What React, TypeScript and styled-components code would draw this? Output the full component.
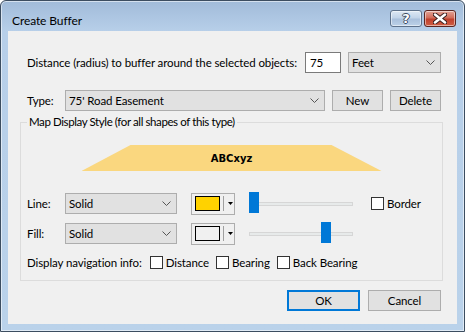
import styled, { createGlobalStyle } from 'styled-components';

const GlobalStyle = createGlobalStyle`
  html, body {
    margin: 0;
    padding: 0;
    background: #ffffff;
  }
  body {
    font-family: Lato, "Noto Sans", sans-serif;
    font-size: 11.5px;
    letter-spacing: -0.1px;
    color: #000;
  }
`;

const Window = styled.div`
  width: 465px;
  height: 332px;
  box-sizing: border-box;
  border: 1px solid #3c4d60;
  border-radius: 6px 6px 0 0;
  background: linear-gradient(#a1bbd9, #b7cfe9 30px, #bad2ea);
  box-shadow: inset 0 0 0 1px rgba(255, 255, 255, 0.55);
  display: flex;
  flex-direction: column;
  overflow: hidden;
`;

const TitleBar = styled.div`
  height: 30px;
  box-sizing: border-box;
  padding: 8px 8px 0 11px;
  display: flex;
  align-items: center;
`;

const Title = styled.div`
  flex: 1;
  font-size: 12px;
`;

const CaptionButtons = styled.div`
  align-self: flex-start;
  margin-top: 1px;
  display: flex;
  gap: 2px;
`;

const CaptionButton = styled.div<{ $close?: boolean }>`
  width: 32px;
  height: 17px;
  box-sizing: border-box;
  border-radius: 3px;
  border: 1px solid ${p => (p.$close ? '#5a2520' : '#5d718b')};
  background: ${p =>
    p.$close
      ? 'linear-gradient(#e3a497, #d26c5a 45%, #c0402c 55%, #cf5e44)'
      : 'linear-gradient(#dde8f4, #c2d4e9 45%, #a9c0dc 55%, #bcd1e8)'};
  box-shadow: inset 0 0 0 1px rgba(255, 255, 255, 0.5);
  display: flex;
  align-items: center;
  justify-content: center;
  color: #fff;
  font-family: "DejaVu Sans", sans-serif;
  font-weight: bold;
  font-size: 13px;
  line-height: 1;
  text-shadow: -1px 0 #3b4b60, 1px 0 #3b4b60, 0 -1px #3b4b60, 0 1px #3b4b60;
`;

const Panel = styled.div`
  margin: 0 7px;
  height: 293px;
  background: #f0f0f0;
  box-sizing: border-box;
  padding: 21px 14px 0 12px;
  display: flex;
  flex-direction: column;
`;

const Row = styled.div<{ $top?: number }>`
  display: flex;
  align-items: center;
  height: 21px;
  padding: 0 2px 0 7px;
  margin-top: ${p => p.$top ?? 0}px;
`;

const Label = styled.span<{ $width?: number }>`
  white-space: nowrap;
  ${p => (p.$width ? `width: ${p.$width}px; flex: none;` : '')}
`;

const TextBox = styled.div`
  width: 36px;
  height: 21px;
  box-sizing: border-box;
  margin-left: auto;
  border: 1px solid #7a7a7a;
  background: #fff;
  padding-left: 4px;
  display: flex;
  align-items: center;
`;

const Select = styled.div<{ $width?: number; $ml?: number }>`
  height: 21px;
  box-sizing: border-box;
  border: 1px solid #adadad;
  background: #e1e1e1;
  padding: 0 5px 0 3px;
  display: flex;
  align-items: center;
  justify-content: space-between;
  ${p => (p.$width ? `width: ${p.$width}px; flex: none;` : 'flex: 1;')}
  margin-left: ${p => p.$ml ?? 0}px;
`;

const Button = styled.div<{ $width: number; $default?: boolean; $ml?: number }>`
  width: ${p => p.$width}px;
  height: 21px;
  box-sizing: border-box;
  border: 1px solid ${p => (p.$default ? '#0078d7' : '#adadad')};
  box-shadow: ${p => (p.$default ? 'inset 0 0 0 1px #0078d7' : 'none')};
  background: #e1e1e1;
  display: flex;
  align-items: center;
  justify-content: center;
  margin-left: ${p => p.$ml ?? 0}px;
`;

const Group = styled.fieldset`
  margin: 3px 0 0;
  padding: 0 6px;
  height: 167px;
  box-sizing: border-box;
  border: 1px solid #dcdcdc;
  display: flex;
  flex-direction: column;
  min-width: 0;
`;

const Legend = styled.legend`
  padding: 0 2px;
  line-height: 16px;
  letter-spacing: -0.4px;
`;

const Preview = styled.div`
  width: 300px;
  height: 26px;
  margin: 15px auto 0;
  background: #fad77f;
  clip-path: polygon(49px 0, 250px 0, 100% 100%, 0 100%);
  display: flex;
  align-items: center;
  justify-content: center;
  font-family: "DejaVu Sans", sans-serif;
  font-weight: bold;
  font-size: 10px;
  letter-spacing: 0;
`;

const StyleRow = styled.div<{ $top: number }>`
  display: flex;
  align-items: center;
  height: 21px;
  margin-top: ${p => p.$top}px;
`;

const ColorButton = styled.div`
  width: 44px;
  height: 22px;
  box-sizing: border-box;
  margin-left: 14px;
  border: 1px solid #adadad;
  background: #f0f0f0;
  display: flex;
  align-items: center;
  padding-left: 3px;
`;

const Swatch = styled.div<{ $color: string }>`
  width: 25px;
  height: 15px;
  box-sizing: border-box;
  border: 1.5px solid #000;
  background: ${p => p.$color};
`;

const Divider = styled.div`
  width: 1px;
  height: 15px;
  background: #a0a0a0;
  margin-left: 3px;
`;

const Slider = styled.div`
  width: 104px;
  height: 21px;
  margin-left: 14px;
  display: flex;
  align-items: center;
  position: relative;
`;

const Track = styled.div`
  width: 100%;
  height: 4px;
  box-sizing: border-box;
  background: #e7eaea;
  border: 1px solid #d6d6d6;
`;

const Thumb = styled.div`
  position: absolute;
  top: -1px;
  width: 10px;
  height: 21px;
  background: #0078d7;
`;

const CheckItem = styled.label<{ $ml?: number }>`
  display: flex;
  align-items: center;
  gap: 3px;
  margin-left: ${p => p.$ml ?? 0}px;
`;

const Box = styled.span`
  width: 13px;
  height: 13px;
  box-sizing: border-box;
  border: 1px solid #333;
  background: #fff;
  flex: none;
`;

const NavRow = styled.div`
  display: flex;
  align-items: center;
  height: 16px;
  margin-top: 10px;
`;

const Footer = styled.div`
  display: flex;
  justify-content: flex-end;
  gap: 8px;
  padding-right: 2px;
  margin-top: 9px;
`;

function Chevron() {
  return (
    <svg width="9" height="5" viewBox="0 0 9 5">
      <path d="M0.5 0.5 L4.5 4.5 L8.5 0.5" fill="none" stroke="#555" strokeWidth="1" />
    </svg>
  );
}

function DropArrow() {
  return (
    <svg width="5" height="3" viewBox="0 0 5 3" style={{ marginLeft: 4 }}>
      <path d="M0 0 H5 L2.5 3 Z" fill="#000" />
    </svg>
  );
}

function Check({ label, ml }: { label: string; ml?: number }) {
  return (
    <CheckItem $ml={ml}>
      <Box />
      <span>{label}</span>
    </CheckItem>
  );
}

function StyleLine({ label, color, thumb, top, border }: { label: string; color: string; thumb: number; top: number; border?: boolean }) {
  return (
    <StyleRow $top={top}>
      <Label $width={38}>{label}</Label>
      <Select $width={112}>
        <span>Solid</span>
        <Chevron />
      </Select>
      <ColorButton>
        <Swatch $color={color} />
        <Divider />
        <DropArrow />
      </ColorButton>
      <Slider>
        <Track />
        <Thumb style={{ left: thumb }} />
      </Slider>
      {border && <Check label="Border" ml={18} />}
    </StyleRow>
  );
}

export default function App() {
  return (
    <>
      <GlobalStyle />
      <Window>
        <TitleBar>
          <Title>Create Buffer</Title>
          <CaptionButtons>
            <CaptionButton>?</CaptionButton>
            <CaptionButton $close>
              <svg width="14" height="11" viewBox="0 0 14 11">
                <path d="M2 1.5 L12 9.5 M12 1.5 L2 9.5" stroke="#3b2020" strokeWidth="4.5" strokeLinecap="round" />
                <path d="M2 1.5 L12 9.5 M12 1.5 L2 9.5" stroke="#fff" strokeWidth="2.5" strokeLinecap="round" />
              </svg>
            </CaptionButton>
          </CaptionButtons>
        </TitleBar>
        <Panel>
          <Row>
            <Label>Distance (radius) to buffer around the selected objects:</Label>
            <TextBox>75</TextBox>
            <Select $width={93} $ml={7}>
              <span>Feet</span>
              <Chevron />
            </Select>
          </Row>
          <Row $top={17}>
            <Label $width={38}>Type:</Label>
            <Select>
              <span>75' Road Easement</span>
              <Chevron />
            </Select>
            <Button $width={51} $ml={7}>New</Button>
            <Button $width={51} $ml={7}>Delete</Button>
          </Row>
          <Group>
            <Legend>Map Display Style (for all shapes of this type)</Legend>
            <Preview>ABCxyz</Preview>
            <StyleLine label="Line:" color="#ffd200" thumb={0} top={22} border />
            <StyleLine label="Fill:" color="#f0f0f0" thumb={72} top={9} />
            <NavRow>
              <Label>Display navigation info:</Label>
              <Check label="Distance" ml={8} />
              <Check label="Bearing" ml={7} />
              <Check label="Back Bearing" ml={7} />
            </NavRow>
          </Group>
          <Footer>
            <Button $width={73} $default>OK</Button>
            <Button $width={73}>Cancel</Button>
          </Footer>
        </Panel>
      </Window>
    </>
  );
}
